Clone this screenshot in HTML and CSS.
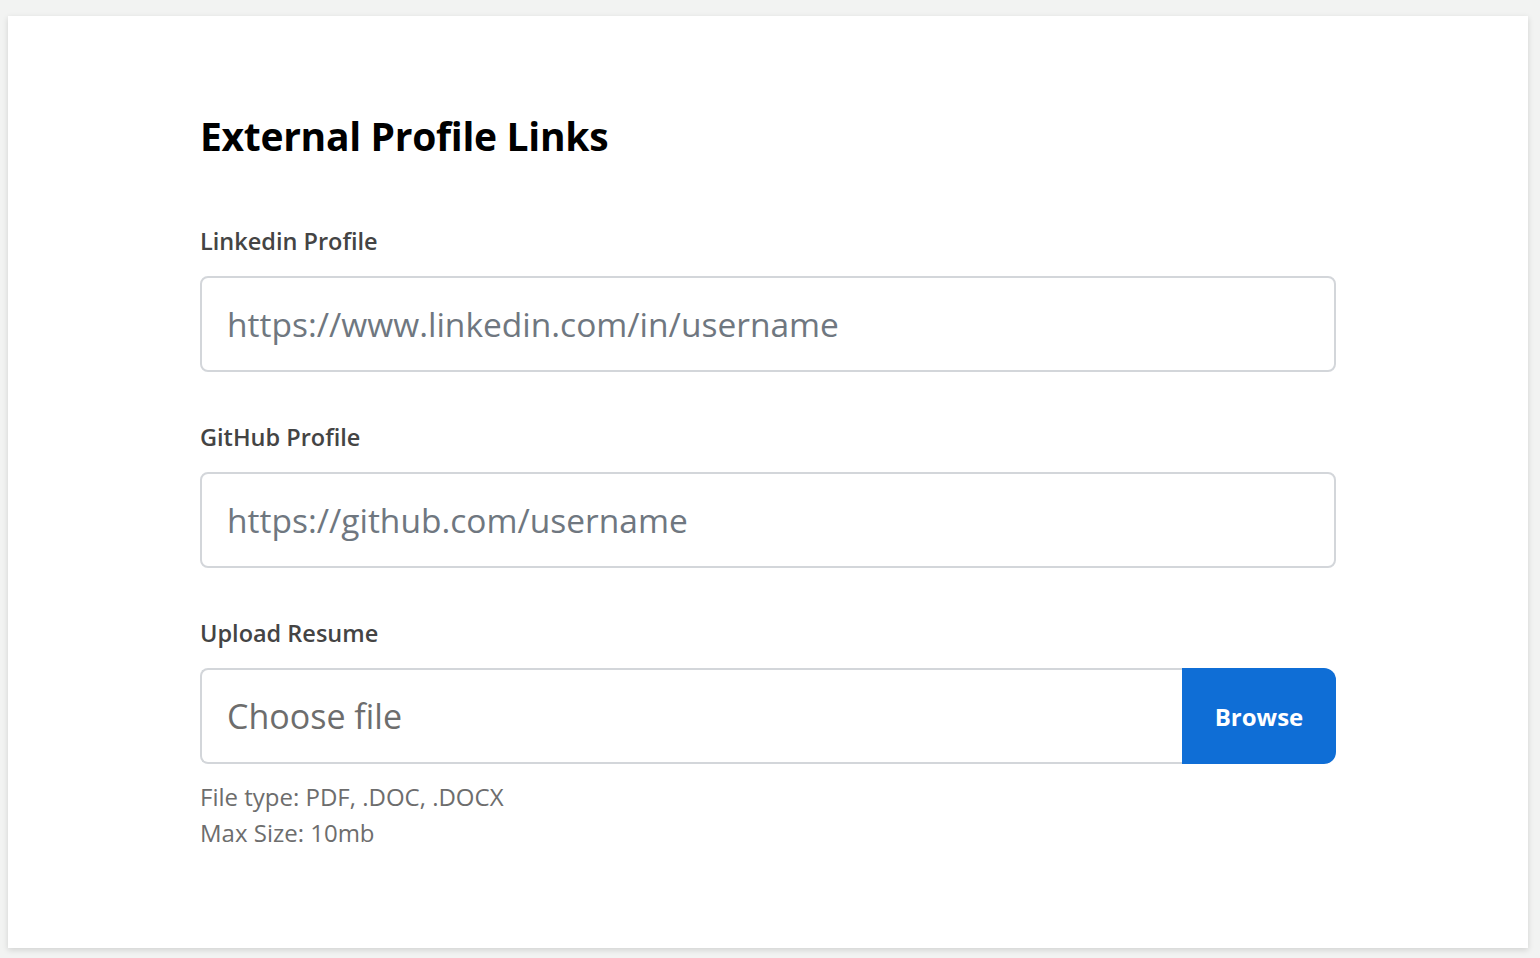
FILE: index.html
```html
<!DOCTYPE html>
<html lang="en">
<head>
<meta charset="utf-8">
<title>External Profile Links</title>
<link rel="stylesheet" href="styles.css">
</head>
<body>
<div class="page">
  <main class="card">
    <h1 class="title">External Profile Links</h1>
    <div class="field">
      <label class="label" for="linkedin">Linkedin Profile</label>
      <input class="input" id="linkedin" type="text" placeholder="https://www.linkedin.com/in/username">
    </div>
    <div class="field">
      <label class="label" for="github">GitHub Profile</label>
      <input class="input" id="github" type="text" placeholder="https://github.com/username">
    </div>
    <div class="field">
      <label class="label">Upload Resume</label>
      <div class="file">
        <span class="file-text">Choose file</span>
        <span class="file-btn">Browse</span>
      </div>
      <p class="help">File type: PDF, .DOC, .DOCX<br>Max Size: 10mb</p>
    </div>
  </main>
</div>
</body>
</html>
```

FILE: styles.css
```css
* { box-sizing: border-box; }
html, body { margin: 0; padding: 0; }
body {
  background: #f2f3f2;
  font-family: "Open Sans", "Liberation Sans", sans-serif;
}
.page {
  padding: 16px 12px 10px 8px;
}
.card {
  background: #fff;
  height: 932px;
  padding: 96px 192px 0 192px;
  box-shadow: 0 2px 6px rgba(0, 0, 0, 0.14);
}
.title {
  margin: 0 0 66px 0;
  font-size: 39px;
  line-height: 48px;
  font-weight: 700;
  color: #000;
  letter-spacing: -0.3px;
}
.field {
  margin-bottom: 50px;
}
.label {
  display: block;
  font-size: 23.5px;
  line-height: 30px;
  font-weight: 650;
  color: #444;
  margin-bottom: 20px;
}
.input {
  display: block;
  width: 100%;
  height: 96px;
  border: 2px solid #d3d6da;
  border-radius: 8px;
  padding: 0 25px;
  font-family: inherit;
  font-size: 33.5px;
  color: #333;
  background: #fff;
  outline: none;
}
.input::placeholder {
  color: #6f7780;
}
.file {
  display: flex;
  height: 96px;
}
.file-text {
  flex: 1;
  display: flex;
  align-items: center;
  padding: 0 25px;
  border: 2px solid #d3d6da;
  border-right: none;
  border-radius: 8px 0 0 8px;
  font-size: 34px;
  color: #6d6d6d;
}
.file-btn {
  width: 154px;
  display: flex;
  align-items: center;
  justify-content: center;
  background: #0f6ed6;
  color: #fff;
  font-size: 24px;
  font-weight: 700;
  border-radius: 0 12px 12px 0;
}
.help {
  margin: 15px 0 0 0;
  font-size: 24px;
  line-height: 36px;
  color: #6d6d6d;
}
```
